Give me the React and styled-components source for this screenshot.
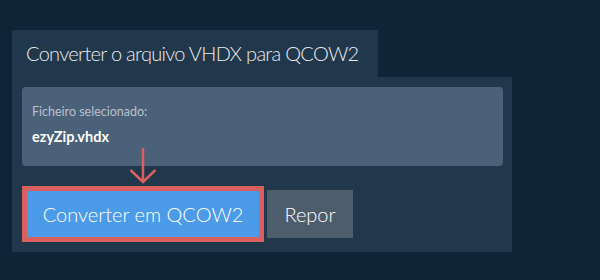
import styled, { createGlobalStyle } from "styled-components";

const GlobalStyle = createGlobalStyle`
  html, body {
    margin: 0;
    padding: 0;
    background: #0f2537;
    font-family: Lato, "Open Sans", sans-serif;
  }
`;

const Page = styled.div`
  width: 600px;
  height: 280px;
  padding: 30px 0 0 12px;
  box-sizing: border-box;
  background: #0f2537;
`;

const Tab = styled.div`
  width: 366px;
  height: 47px;
  box-sizing: border-box;
  padding: 10px 0 0 14px;
  background: #20374c;
  color: #ebebeb;
  font-size: 20px;
  font-weight: 300;
  line-height: 26px;
  letter-spacing: -0.7px;
  white-space: nowrap;
`;

const Panel = styled.div`
  position: relative;
  width: 500px;
  box-sizing: border-box;
  padding: 10px 9px 10px 10px;
  background: #20374c;
`;

const FileCard = styled.div`
  height: 79px;
  box-sizing: border-box;
  padding: 17px 10px 0;
  border-radius: 4px;
  background: #4b6079;
`;

const Label = styled.div`
  color: #b8c2cd;
  font-size: 12.5px;
  line-height: 16px;
`;

const FileName = styled.div`
  margin-top: 8px;
  color: #ffffff;
  font-size: 14.5px;
  font-weight: 700;
  line-height: 18px;
`;

const Actions = styled.div`
  display: flex;
  align-items: center;
  gap: 3px;
  margin-top: 20px;
`;

const Highlight = styled.div`
  border: 5px solid #d9605c;
  display: flex;
`;

const Button = styled.button`
  height: ${(p) => (p.$tall ? 48 : 46)}px;
  width: ${(p) => p.$width}px;
  border: none;
  padding: 0;
  background: ${(p) => p.$bg};
  color: #ffffff;
  font-family: Lato, "Open Sans", sans-serif;
  font-size: 20px;
  font-weight: 300;
  cursor: pointer;
`;

const Arrow = styled.svg`
  position: absolute;
  left: 117px;
  top: 71px;
`;

export default function App() {
  return (
    <>
      <GlobalStyle />
      <Page>
        <Tab>Converter o arquivo VHDX para QCOW2</Tab>
        <Panel>
          <FileCard>
            <Label>Ficheiro selecionado:</Label>
            <FileName>ezyZip.vhdx</FileName>
          </FileCard>
          <Arrow width="28" height="36" viewBox="0 0 28 36">
            <path
              d="M14 0 V34 M1.5 22 L14 34 L26.5 22"
              fill="none"
              stroke="#d9605c"
              strokeWidth="2.5"
            />
          </Arrow>
          <Actions>
            <Highlight>
              <Button $width={232} $bg="#4c9be8">
                Converter em QCOW2
              </Button>
            </Highlight>
            <Button $width={86} $tall $bg="#4e5d6c">
              Repor
            </Button>
          </Actions>
        </Panel>
      </Page>
    </>
  );
}
